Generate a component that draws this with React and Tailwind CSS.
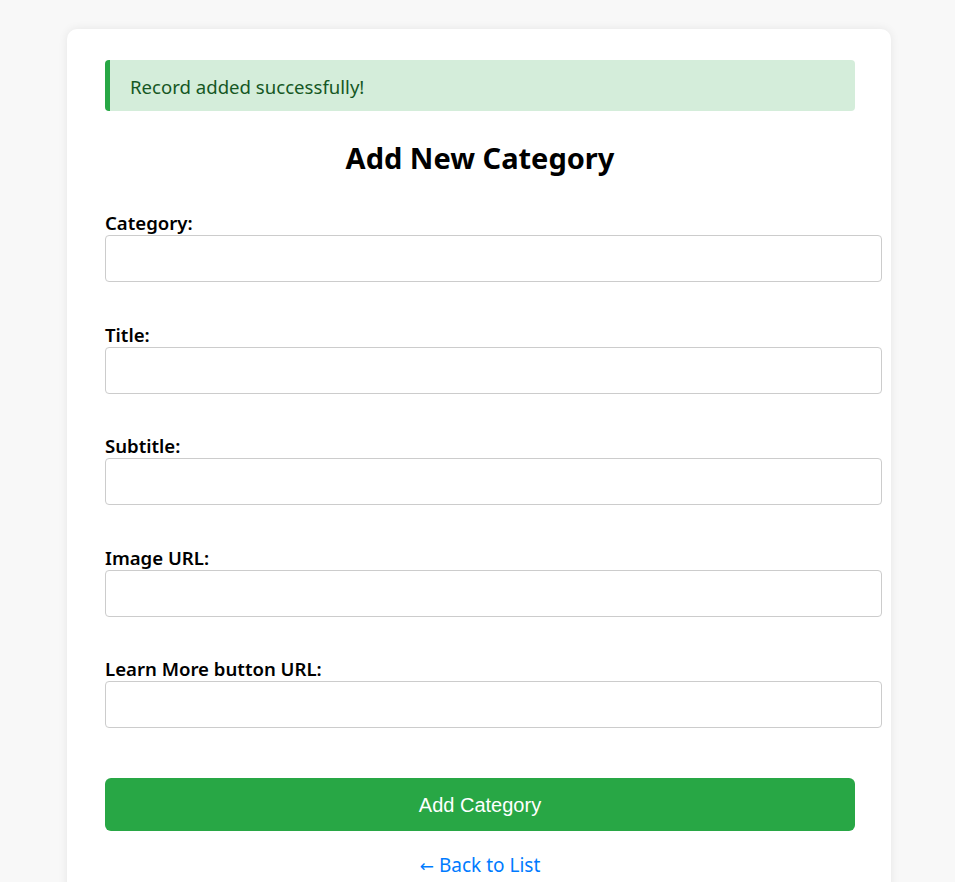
import React, { useState } from "react";

const fields = [
    { name: "category", label: "Category:" },
    { name: "title", label: "Title:" },
    { name: "subtitle", label: "Subtitle:" },
    { name: "image", label: "Image URL:" },
    { name: "learnMore", label: "Learn More button URL:" },
];

const App = () => {
    const [form, setForm] = useState({});

    const handleChange = (e) => {
        setForm({ ...form, [e.target.name]: e.target.value });
    };

    return (
        <div className="min-h-screen bg-[#f8f8f8] pt-[29px] font-['Noto_Sans',sans-serif]">
            <div className="ml-[67px] w-[824px] bg-white rounded-[10px] shadow-[0_0_10px_rgba(0,0,0,0.08)] pt-[31px] pl-[38px] pr-[36px] pb-[20px]">
                {/* Success alert */}
                <div className="h-[51px] flex items-center bg-[#d4edda] text-[#155724] border-l-[5px] border-[#28a745] rounded-[4px] pl-[20px] pt-[3px] text-[18.6px]">
                    Record added successfully!
                </div>

                <h2 className="text-center text-[29px] font-bold leading-[36px] mt-[29px] mb-[35px] text-black">
                    Add New Category
                </h2>

                <form onSubmit={(e) => e.preventDefault()}>
                    {fields.map((f) => (
                        <div key={f.name} className="mb-[40.5px]">
                            <label className="block text-[18.6px] font-semibold leading-[24px] text-black">{f.label}</label>
                            <input
                                type="text"
                                name={f.name}
                                value={form[f.name] || ""}
                                onChange={handleChange}
                                className="block w-[777px] h-[47px] border border-[#cccccc] rounded-[4px] px-3 text-base bg-white outline-none"
                            />
                        </div>
                    ))}

                    <button
                        type="submit"
                        className="block w-full h-[53px] mt-[50px] bg-[#28a745] text-white rounded-[6px] text-[20px] font-['Liberation_Sans',Arial,sans-serif]"
                    >
                        Add Category
                    </button>
                </form>

                <div className="text-center mt-[20px]">
                    <a href="#" className="text-[#007bff] text-[19px] leading-[28px]">
                        <span className="font-['DejaVu_Sans',sans-serif] text-[17px]">←</span> Back to List
                    </a>
                </div>
            </div>
        </div>
    );
};

export default App;
